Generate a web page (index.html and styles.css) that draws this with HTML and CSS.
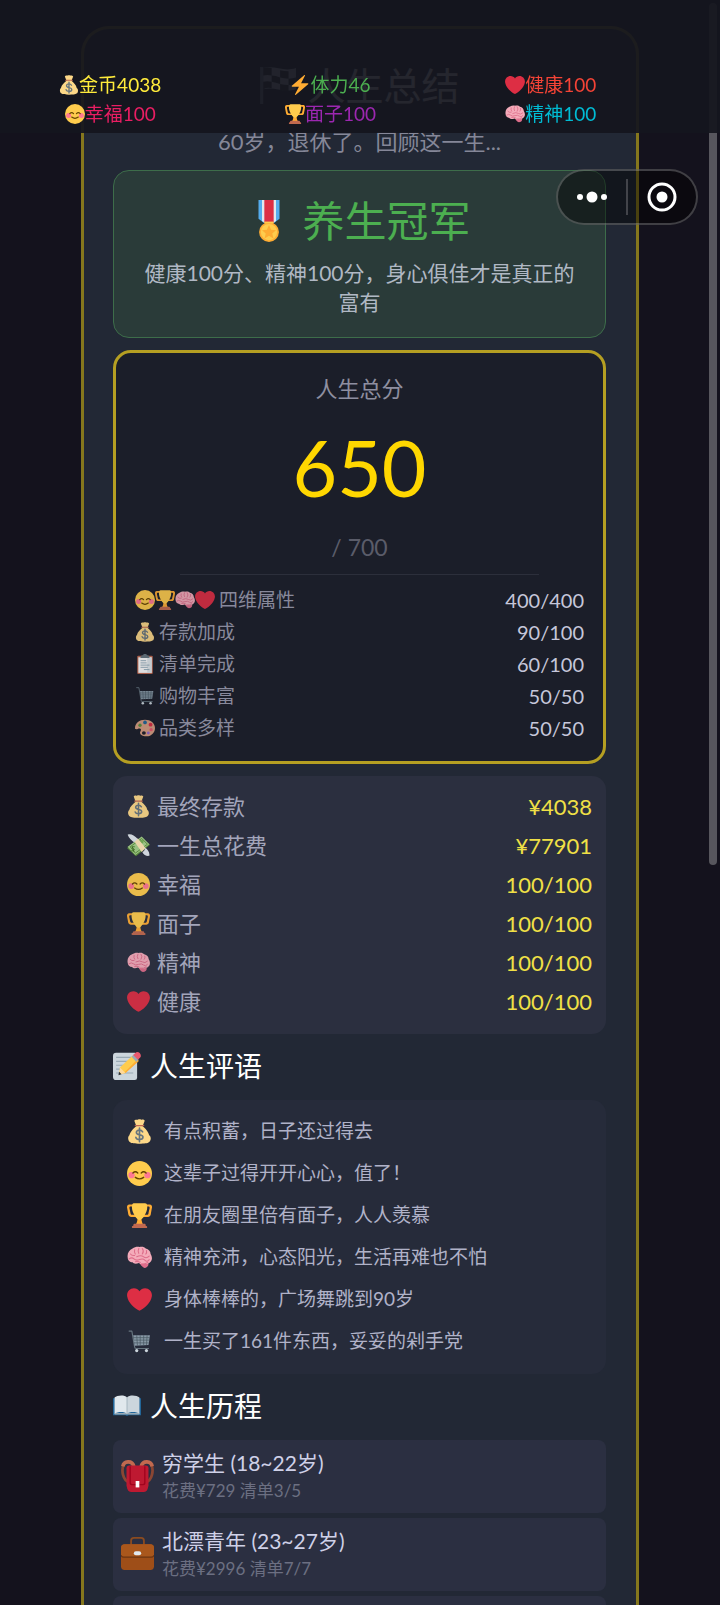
FILE: index.html
```html
<!DOCTYPE html>
<html lang="zh-CN">
<head>
  <meta charset="UTF-8">
  <meta name="viewport" content="width=device-width, initial-scale=1.0">
  <title>人生总结</title>
  <link rel="stylesheet" href="styles.css">
</head>
<body>
  <!-- 图标 -->
  <svg class="sprite" aria-hidden="true">
    <symbol id="heart" viewBox="0 0 36 36">
      <path fill="#DD2E44" d="M35.885 11.833c0-5.45-4.418-9.868-9.867-9.868-3.308 0-6.227 1.633-8.018 4.129-1.791-2.496-4.71-4.129-8.017-4.129-5.45 0-9.868 4.417-9.868 9.868 0 .772.098 1.52.266 2.241C1.751 22.587 11.216 31.568 18 34.034c6.783-2.466 16.249-11.447 17.617-19.959.17-.721.268-1.469.268-2.242z"/>
    </symbol>
    <symbol id="smile" viewBox="0 0 36 36">
      <circle fill="#FFCC4D" cx="18" cy="18" r="18"/>
      <circle fill="#FF7892" cx="6.5" cy="20.5" r="4.5"/>
      <circle fill="#FF7892" cx="29.5" cy="20.5" r="4.5"/>
      <path fill="none" stroke="#664500" stroke-width="2" stroke-linecap="round" d="M8.5 17.2q3.5-3.4 7 0M20.500 17.200q3.500-3.400 7 0M12 23.500q6 4.500 12 0"/>
    </symbol>
    <symbol id="trophy" viewBox="0 0 36 36">
      <path fill="#FFAC33" d="M5.123 5h6C12.227 5 13 4.896 13 6V4c0-1.104-.773-2-1.877-2h-8c-2 0-3.583 2.125-3 5 0 0 1.791 9.375 1.917 9.958C2.373 18.5 4.164 20 6.081 20h6.958c1.105 0-.039-1.896-.039-3v-2c0 1.104-.773 2-1.877 2h-4c-1.104 0-1.833-1.042-2-2S3.539 7.667 3.539 7.667C3.206 5.75 4.018 5 5.123 5zm25.812 0h-6C23.831 5 22 4.896 22 6V4c0-1.104 1.831-2 2.935-2h8c2 0 3.584 2.125 3 5 0 0-1.633 9.419-1.771 10-.354 1.5-2.042 3-4 3h-7.146C21.914 20 22 18.104 22 17v-2c0 1.104 1.831 2 2.935 2h4c1.104 0 1.834-1.042 2-2s1.584-7.333 1.584-7.333C32.851 5.75 32.04 5 30.935 5zM20.832 22c0-6.958-2.709 0-2.709 0s-3-6.958-3 0-3.291 10-3.291 10h12.292c-.001 0-3.292-3.042-3.292-10z"/>
      <path fill="#FFCC4D" d="M29.123 6.577c0 6.775-6.77 18.192-11 18.192-4.231 0-11-11.417-11-18.192 0-5.195 1-6.319 3-6.319 1.374 0 6.025-.027 8-.027l7-.001c2.917-.001 4 .684 4 6.347z"/>
      <path fill="#C1694F" d="M27 33c0 1.104.227 2-.877 2h-16C9.018 35 9 34.104 9 33v-1c0-1.104 1.164-2 2.206-2h13.917c1.042 0 1.877.896 1.877 2v1z"/>
      <path fill="#C1694F" d="M29 34.625c0 .76.165 1.375-1.252 1.375H8.498C7.206 36 7 35.385 7 34.625v-.25C7 33.615 7.738 33 8.498 33h19.25c.759 0 1.252.615 1.252 1.375v.25z"/>
    </symbol>
    <symbol id="bolt" viewBox="0 0 36 36">
      <path fill="#FFAC33" d="M32.938 15.651C32.792 15.26 32.418 15 32 15H19.925L26.89 1.458c.219-.426.106-.947-.271-1.243C26.437.071 26.218 0 26 0c-.233 0-.466.082-.653.243L18 6.588 3.347 19.243c-.316.273-.43.714-.284 1.105S3.582 21 4 21h12.075L9.11 34.542c-.219.426-.106.947.271 1.243.182.144.401.215.619.215.233 0 .466-.082.653-.243L18 29.412l14.653-12.655c.317-.273.43-.714.285-1.106z"/>
    </symbol>
    <symbol id="bag" viewBox="0 0 36 36">
      <path fill="#FDD888" d="M31.900 23.300c-.900-4.800-5.600-9.900-9.400-12.800L25.500 2.500C23.500-.2 21.500 1.400 20.500 1 19 .2 17 .2 15.500 1c-1.200.5-3.500-1.200-5 1.500l3 8C9.500 13.400 4.600 18.500 3.500 23.300 1 25 .8 31 4.500 33.500 7 36.300 29 36.300 31.500 33.500 35.300 31 34.800 25 31.900 23.300z"/>
      <path fill="none" stroke="#BF6952" stroke-width="2" stroke-linecap="round" d="M12 9.500h12"/>
      <path fill="none" stroke="#67757F" stroke-width="2.400" stroke-linecap="round" d="M22.500 18.500q-1.500-2.500-4.500-2.500c-3 0-4.500 1.500-4.500 3.300 0 4.700 9.500 2.200 9.500 6.700 0 2-2 3.500-5 3.500-2.500 0-4.500-1-5.200-3M18 13v19.500"/>
    </symbol>
    <symbol id="brain" viewBox="0 0 36 36">
      <path fill="#DD6D8A" d="M20 24l8 1 3 2c0 4-3 6-6 6-3-1-6-4-7-8z"/>
      <path fill="#F4ABBA" d="M18 3c4-1 7 0 9 2 4 1 7 4 7 8 2 3 3 8 0 11-2 3-7 4-10 3-3 1-6 0-7-1-4 2-8 1-9-1-4 0-7-3-7-7-1-6 2-11 7-13 3-2 7-3 10-2z"/>
      <path fill="none" stroke="#DD6D8A" stroke-width="1.500" stroke-linecap="round" d="M11 7q-1 4 1 6M17 5q-2 4 0 7M22 5q3 4 0 8M28 8q1 3-1 5M5 13q2 3 6 2M14 17q6-3 10 0t8-1M3 20q4-3 7 0t8 1 8 1 6-1M12 24q4-1 7 1M21 27q5 1 9-2"/>
    </symbol>
    <symbol id="clipboard" viewBox="0 0 36 36">
      <rect fill="#C1694F" x="4" y="3" width="28" height="33" rx="2"/>
      <path fill="#FFF" d="M6 6h24v28H6z"/>
      <path fill="#E1E8ED" d="M22 34V6h8v28z"/>
      <path fill="#66757F" d="M10 7V5c0-2 4-2 5-3a3 3 0 0 1 6 0c1 1 5 1 5 3v2z"/>
      <path stroke="#88A5B5" stroke-width="1.500" d="M10 12h10M10 16h11M10 20h16M10 24h13M16 28h10"/>
    </symbol>
    <symbol id="cart" viewBox="0 0 36 36">
      <path fill="none" stroke="#66757F" stroke-width="1.600" stroke-linecap="round" stroke-linejoin="round" d="M3 3h4l4 23q0 2 2 2h18"/>
      <path fill="#8899A6" d="M9 9h24l-2 14-20 1z"/>
      <path fill="none" stroke="#455560" d="M9 12.500h24M10 16h22M10 20h21M14 9l1 15M19 9v15M24 9v15M29 9l-1 14"/>
      <circle fill="#CCD6DD" cx="14" cy="31" r="2.300"/><circle fill="#CCD6DD" cx="28" cy="31" r="2.300"/>
    </symbol>
    <symbol id="palette" viewBox="0 0 36 36">
      <path fill="#D99E82" fill-rule="evenodd" d="M18 3C8 3 0 9 0 18c0 1 .3 2 1 2 3 1 5-2 8-1 4 2 0 5 0 8 1 5 8 6 12 6 9 0 15-7 15-15C36 9 28 3 18 3zm-2 27a3.500 3 0 1 1 0-6 3.500 3 0 0 1 0 6z"/>
      <circle fill="#5C913B" cx="9" cy="13" r="3"/><circle fill="#226699" cx="18" cy="8" r="3.300"/><circle fill="#DD2E44" cx="28" cy="12" r="3.500"/><circle fill="#EA596E" cx="29" cy="21" r="3"/><circle fill="#9266CC" cx="24" cy="27" r="2.500"/>
    </symbol>
    <symbol id="money" viewBox="0 0 36 36">
      <path fill="#5C913B" d="M0 22L23 6l13 11-22 18z"/>
      <path fill="#A7D28B" d="M1 20L23 4l12 12-22 17z"/>
      <path fill="none" stroke="#5C913B" stroke-width="1.500" d="M5 20L23 7l9 9-19 14z"/>
      <ellipse fill="#77B255" cx="22" cy="12" rx="4" ry="3"/>
      <path fill="#FFE8B6" d="M11 11l6-4 12 15-6 6z"/>
      <path fill="#E1E8ED" d="M1 1c5-2 10 1 16 7l-6 5C8 10 3 7 1 1zM24 28c5-1 3-6 5-6 3 2 7 7 6 12-4 1-9-1-11-6z"/>
      <path fill="none" stroke="#3E721D" stroke-width="1.500" d="M12 20c-4-1-5 2-2 3s1 4-3 3M8 19l3 9"/>
    </symbol>
    <symbol id="memo" viewBox="0 0 36 36">
      <path fill="#CCD6DD" d="M4 1h24a3 3 0 0 1 3 3v29a3 3 0 0 1-3 3H4a4 4 0 0 1-4-4V5a4 4 0 0 1 4-4z"/>
      <path fill="none" stroke="#99AAB5" stroke-width="1.500" d="M4 7h21M4 12h18M4 17h14M4 22h10M4 27h22"/>
      <path fill="#FFCC4D" d="M9 20L26 4l7 7-17 16-8 2z"/>
      <path fill="#FFAC33" d="M14 27L31 10l2 2-17 15z"/>
      <path fill="#FFD99B" d="M9 20l7 7-8 2z"/><path fill="#292F33" d="M7.800 25.500L7 30l4-1.500z"/>
      <path fill="#99AAB5" d="M24 6l3-3 6 6-3 4z"/><path fill="#EA596E" d="M26 4l3-3c3-3 9 2 6 6l-3 3z"/>
    </symbol>
    <symbol id="book" viewBox="0 0 36 36">
      <path fill="#226699" d="M0 8h36v22H20l-2 1-2-1H0z"/>
      <path fill="#99AAB5" d="M2 27h32v2H2z"/>
      <path fill="#E1E8ED" d="M2 7c3-3 13-4 16 0v21c-3-3-12-3-16 0z"/>
      <path fill="#CCD6DD" d="M18 7c3-4 13-3 16 0v21c-4-3-13-3-16 0z"/>
      <path stroke="#99AAB5" d="M18 7v21"/>
    </symbol>
    <symbol id="backpack" viewBox="0 0 36 36">
      <path fill="none" stroke="#8A4633" stroke-width="3" d="M9 25C2 24 0 12 3 6M27 25c7-1 9-13 6-19"/>
      <path fill="none" stroke="#C1694F" stroke-width="4" d="M2 8c1-6 10-7 12 0M34 8c-1-6-10-7-12 0"/>
      <path fill="#BE1931" d="M9 7h18c2 0 3 1 3 3v19c-1 5-2 7-5 7H11c-3 0-4-2-5-7V10c0-2 1-3 3-3z"/>
      <path fill="none" stroke="#A0041E" stroke-width="1.500" d="M10 8v18q0 2 2 2h12q2 0 2-2V8"/>
      <rect fill="#FFF" x="16" y="24" width="4" height="7"/>
    </symbol>
    <symbol id="briefcase" viewBox="0 0 36 36">
      <path fill="none" stroke="#8A4B20" stroke-width="2" d="M11 9V4q0-3 3-3h8q3 0 3 3v5"/>
      <rect fill="#9E4E18" y="8" width="36" height="28" rx="4"/>
      <path fill="#A9571C" d="M4 8h28a4 4 0 0 1 4 4v7q0 3-3 3H3q-3 0-3-3v-7a4 4 0 0 1 4-4z"/>
      <path fill="none" stroke="#6B3411" stroke-width="1.200" d="M0 20q1 2 3 2h30q2 0 3-2"/>
      <rect fill="#E1E8ED" x="14" y="15.500" width="8" height="4.500" rx="2.200"/>
    </symbol>
    <symbol id="medal" viewBox="0 0 36 36">
      <path fill="#55ACEE" d="M9 0h18v16l-5 4h-8l-5-4z"/>
      <path fill="#E1E8ED" d="M12 0h12v18l-3 2h-6l-3-2z"/>
      <path fill="#DD2E44" d="M14 0h8v20h-8z"/>
      <circle fill="#FFAC33" cx="18" cy="27.500" r="8.500"/>
      <circle fill="#FFCC4D" cx="18" cy="27.500" r="7"/>
      <path fill="#FFAC33" d="M18 21.500l1.800 4 4.200.4-3.200 2.800 1 4.200L18 30.700l-3.800 2.200 1-4.200L12 25.900l4.200-.4z"/>
      <path fill="#FFCC4D" d="M14 18.500h8v1.500h-8z"/>
    </symbol>
    <symbol id="flag" viewBox="0 0 36 36">
      <path fill="#8899A6" d="M1 1h3v35H1z"/>
      <path fill="#CCD6DD" d="M4 2c11-3 19 4 31 0v20c-12 4-20-3-31 0z"/>
      <path fill="#292F33" d="M4 2q4-1 8 0v7q-4-1-8 0zM20 4q4 1 8 1v7q-4 0-8-1zM12 9q4 0 8 2v6q-4-1-8-2zM28 12q4 0 7-1v6q-4 1-7 1zM4 15q4-1 8 0v6q-4-1-8 1zM20 17q4 1 8 1v6q-4 0-8-1z"/>
    </symbol>
  </svg>

  <header class="status-bar">
    <div class="status gold"><svg class="icon-sm"><use href="#bag"/></svg>金币4038</div>
    <div class="status energy"><svg class="icon-sm"><use href="#bolt"/></svg>体力46</div>
    <div class="status health"><svg class="icon-sm"><use href="#heart"/></svg>健康100</div>
    <div class="status happy"><svg class="icon-sm"><use href="#smile"/></svg>幸福100</div>
    <div class="status face"><svg class="icon-sm"><use href="#trophy"/></svg>面子100</div>
    <div class="status spirit"><svg class="icon-sm"><use href="#brain"/></svg>精神100</div>
  </header>

  <div class="capsule">
    <button class="capsule-btn" aria-label="更多">
      <svg width="32" height="32" viewBox="0 0 32 32" fill="#fff"><circle cx="4" cy="16" r="3"/><circle cx="16" cy="16" r="5.500"/><circle cx="28" cy="16" r="3"/></svg>
    </button>
    <span class="capsule-line"></span>
    <button class="capsule-btn" aria-label="关闭">
      <svg width="32" height="32" viewBox="0 0 32 32"><circle cx="16" cy="16" r="13" fill="none" stroke="#fff" stroke-width="3"/><circle cx="16" cy="16" r="5.500" fill="#fff"/></svg>
    </button>
  </div>

  <div class="scroll-thumb"></div>

  <main class="summary">
    <h1 class="title"><svg class="icon-title"><use href="#flag"/></svg>人生总结</h1>
    <p class="subtitle">60岁，退休了。回顾这一生...</p>

    <section class="honor">
      <h2 class="honor-name"><svg class="icon-honor"><use href="#medal"/></svg>养生冠军</h2>
      <p class="honor-desc">健康100分、精神100分，身心俱佳才是真正的富有</p>
    </section>

    <section class="score">
      <p class="score-label">人生总分</p>
      <p class="score-num">650</p>
      <p class="score-max">/ 700</p>
      <hr class="score-line">
      <ul class="score-list">
        <li><span class="score-name"><span class="icon-group"><svg class="icon-sm"><use href="#smile"/></svg><svg class="icon-sm"><use href="#trophy"/></svg><svg class="icon-sm"><use href="#brain"/></svg><svg class="icon-sm"><use href="#heart"/></svg></span>四维属性</span><span class="score-value">400/400</span></li>
        <li><span class="score-name"><svg class="icon-sm"><use href="#bag"/></svg>存款加成</span><span class="score-value">90/100</span></li>
        <li><span class="score-name"><svg class="icon-sm"><use href="#clipboard"/></svg>清单完成</span><span class="score-value">60/100</span></li>
        <li><span class="score-name"><svg class="icon-sm"><use href="#cart"/></svg>购物丰富</span><span class="score-value">50/50</span></li>
        <li><span class="score-name"><svg class="icon-sm"><use href="#palette"/></svg>品类多样</span><span class="score-value">50/50</span></li>
      </ul>
    </section>

    <ul class="stats">
      <li><span class="stat-name"><svg class="icon-md"><use href="#bag"/></svg>最终存款</span><span class="stat-value">¥4038</span></li>
      <li><span class="stat-name"><svg class="icon-md"><use href="#money"/></svg>一生总花费</span><span class="stat-value">¥77901</span></li>
      <li><span class="stat-name"><svg class="icon-md"><use href="#smile"/></svg>幸福</span><span class="stat-value">100/100</span></li>
      <li><span class="stat-name"><svg class="icon-md"><use href="#trophy"/></svg>面子</span><span class="stat-value">100/100</span></li>
      <li><span class="stat-name"><svg class="icon-md"><use href="#brain"/></svg>精神</span><span class="stat-value">100/100</span></li>
      <li><span class="stat-name"><svg class="icon-md"><use href="#heart"/></svg>健康</span><span class="stat-value">100/100</span></li>
    </ul>

    <h2 class="section-title"><svg class="icon-lg"><use href="#memo"/></svg>人生评语</h2>
    <ul class="comments">
      <li><svg class="icon-comment"><use href="#bag"/></svg>有点积蓄，日子还过得去</li>
      <li><svg class="icon-comment"><use href="#smile"/></svg>这辈子过得开开心心，值了！</li>
      <li><svg class="icon-comment"><use href="#trophy"/></svg>在朋友圈里倍有面子，人人羡慕</li>
      <li><svg class="icon-comment"><use href="#brain"/></svg>精神充沛，心态阳光，生活再难也不怕</li>
      <li><svg class="icon-comment"><use href="#heart"/></svg>身体棒棒的，广场舞跳到90岁</li>
      <li><svg class="icon-comment"><use href="#cart"/></svg>一生买了161件东西，妥妥的剁手党</li>
    </ul>

    <h2 class="section-title"><svg class="icon-lg"><use href="#book"/></svg>人生历程</h2>
    <ul class="stages">
      <li>
        <svg class="icon-stage"><use href="#backpack"/></svg>
        <div>
          <h3 class="stage-name">穷学生 (18~22岁)</h3>
          <p class="stage-info">花费¥729 清单3/5</p>
        </div>
      </li>
      <li>
        <svg class="icon-stage"><use href="#briefcase"/></svg>
        <div>
          <h3 class="stage-name">北漂青年 (23~27岁)</h3>
          <p class="stage-info">花费¥2996 清单7/7</p>
        </div>
      </li>
      <li></li>
    </ul>
  </main>
</body>
</html>
```

FILE: styles.css
```css
* {
  box-sizing: border-box;
  margin: 0;
  padding: 0;
}

html, body {
  height: 100%;
  overflow: hidden;
}

body {
  background: #14121d;
  font-family: Lato, "Noto Sans CJK SC", sans-serif;
  color: #fff;
}

ul {
  list-style: none;
}

h1, h2, h3 {
  font-weight: 400;
}

svg {
  display: block;
  flex: none;
}

.sprite {
  position: absolute;
  width: 0;
  height: 0;
}

/* Icon sizes */
.icon-sm {
  width: 20px;
  height: 20px;
}

.icon-md {
  width: 23px;
  height: 23px;
}

.icon-comment {
  width: 25px;
  height: 25px;
}

.icon-lg {
  width: 28px;
  height: 28px;
}

.icon-stage {
  width: 33px;
  height: 33px;
}

.icon-title {
  width: 38px;
  height: 38px;
}

.icon-honor {
  width: 42px;
  height: 42px;
}

/* Top status bar */
.status-bar {
  position: fixed;
  z-index: 2;
  top: 0;
  left: 0;
  right: 0;
  display: grid;
  grid-template-columns: repeat(3, 1fr);
  padding: 70px 59px 5px 0;
  background: rgba(20, 21, 30, 0.93);
}

.status {
  display: flex;
  align-items: center;
  justify-content: center;
  font-size: 19px;
  line-height: 29px;
}

.gold { color: #ffeb3b; }
.energy { color: #4caf50; }
.health { color: #f44336; }
.happy { color: #e91e63; }
.face { color: #9c27b0; }
.spirit { color: #00bcd4; }

/* Capsule menu */
.capsule {
  position: fixed;
  z-index: 3;
  top: 169px;
  right: 22px;
  display: flex;
  align-items: center;
  width: 142px;
  height: 56px;
  border: 2px solid rgba(255, 255, 255, 0.22);
  border-radius: 28px;
  background: rgba(0, 0, 0, 0.45);
}

.capsule-btn {
  flex: 1;
  display: flex;
  justify-content: center;
  border: none;
  background: none;
  cursor: pointer;
}

.capsule-line {
  width: 2px;
  height: 36px;
  background: rgba(255, 255, 255, 0.2);
}

.scroll-thumb {
  position: fixed;
  z-index: 1;
  top: 3px;
  right: 3px;
  width: 8px;
  height: 862px;
  border-radius: 4px;
  background: #57565d;
}

/* Summary card */
.summary {
  margin: 26px 81px 0;
  padding: 30px 30px 30px 29px;
  border: 3px solid rgba(255, 215, 0, 0.45);
  border-radius: 28px;
  background: #222835;
}

.title {
  display: flex;
  align-items: center;
  justify-content: center;
  gap: 10px;
  font-size: 38px;
  line-height: 52px;
}

.subtitle {
  margin: 17px 0 14px;
  text-align: center;
  font-size: 22px;
  line-height: 28px;
  color: #858798;
}

.honor {
  margin-bottom: 12px;
  padding: 22px 24px 21px;
  border: 1px solid #3d6d4a;
  border-radius: 16px;
  background: #2a3b39;
  text-align: center;
}

.honor-name {
  display: flex;
  align-items: center;
  justify-content: center;
  gap: 12px;
  margin-bottom: 9px;
  font-size: 42px;
  line-height: 56px;
  color: #4caf50;
}

.honor-desc {
  font-size: 21px;
  line-height: 29px;
  color: #b0b8c4;
}

/* Total score */
.score {
  margin-bottom: 12px;
  padding: 18px 19px 17px;
  border: 3px solid #b59f22;
  border-radius: 18px;
  background: #1b1e29;
  text-align: center;
}

.score-label {
  font-size: 22px;
  line-height: 36px;
  color: #8e8fa0;
}

.score-num {
  font-size: 77px;
  line-height: 120px;
  color: #ffd700;
}

.score-max {
  font-size: 23px;
  line-height: 40px;
  color: #5a5c69;
}

.score-line {
  width: 80%;
  margin: 7px auto 9px;
  border: none;
  border-top: 1px solid #2c2f3b;
}

.score-list li {
  display: flex;
  justify-content: space-between;
  align-items: center;
  line-height: 32px;
}

.score-name {
  display: flex;
  align-items: center;
  gap: 4px;
  font-size: 19px;
  color: #9b9cb0;
  opacity: 0.85;
}

.icon-group {
  display: flex;
}

.score-value {
  font-size: 20px;
  color: #c6c7da;
}

/* Final stats */
.stats {
  padding: 11px 14px 13px;
  border-radius: 14px;
  background: #2b2f3f;
}

.stats li {
  display: flex;
  justify-content: space-between;
  align-items: center;
  line-height: 39px;
}

.stat-name {
  display: flex;
  align-items: center;
  gap: 7px;
  font-size: 22px;
  color: #b0b2c8;
  opacity: 0.9;
}

.stat-value {
  font-size: 22px;
  color: #f0e046;
}

.section-title {
  display: flex;
  align-items: center;
  gap: 9px;
  padding: 11px 0 13px;
  font-size: 28px;
  line-height: 42px;
}

/* Comments */
.comments {
  padding: 10px 14px 12px;
  border-radius: 14px;
  background: #262b3a;
}

.comments li {
  display: flex;
  align-items: center;
  gap: 12px;
  font-size: 19px;
  line-height: 42px;
  color: #b0b2c8;
}

/* Life stages */
.stages {
  display: flex;
  flex-direction: column;
  gap: 5px;
}

.stages li {
  display: flex;
  align-items: center;
  gap: 8px;
  min-height: 73px;
  padding: 7px 8px 9px;
  border-radius: 8px;
  background: #2b2f41;
}

.stage-name {
  font-size: 21px;
  line-height: 31px;
  color: #cfd1e8;
}

.stage-info {
  font-size: 17px;
  line-height: 26px;
  color: #6c6f82;
}
```
